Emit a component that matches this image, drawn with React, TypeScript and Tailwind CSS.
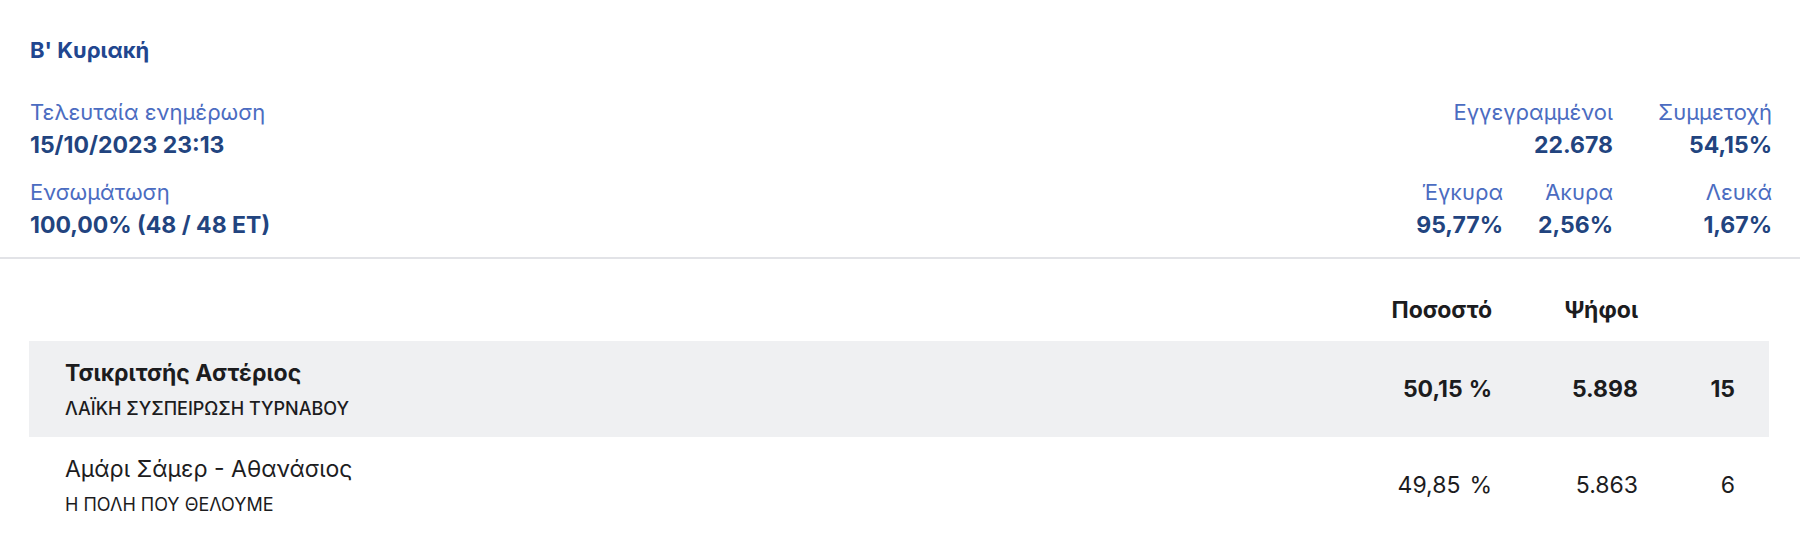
import React from "react";

const stats = [
  { label: "Έγκυρα", value: "95,77%", w: "w-auto" },
  { label: "Άκυρα", value: "2,56%", w: "w-[110px]" },
  { label: "Λευκά", value: "1,67%", w: "w-[159px]" },
];

const candidates = [
  { name: "Τσικριτσής Αστέριος", party: "ΛΑΪΚΗ ΣΥΣΠΕΙΡΩΣΗ ΤΥΡΝΑΒΟΥ", pct: "50,15", votes: "5.898", seats: "15", winner: true },
  { name: "Αμάρι Σάμερ - Αθανάσιος", party: "Η ΠΟΛΗ ΠΟΥ ΘΕΛΟΥΜΕ", pct: "49,85", votes: "5.863", seats: "6", winner: false },
];

function Stat({ label, value, className = "" }: { label: string; value: string; className?: string }) {
  return (
    <div className={`text-right ${className}`}>
      <div className="text-[22px] leading-[33px] text-[#4b6cc1]">{label}</div>
      <div className="text-[23px] leading-[33px] font-bold text-[#22447f]">{value}</div>
    </div>
  );
}

export default function App() {
  return (
    <main className="w-[1800px] h-[541px] bg-white font-['Inter',sans-serif] overflow-hidden">
      {/* Κεφαλίδα εκλογικής περιφέρειας */}
      <section className="pl-[30px] pr-[28px] pt-[36px] pb-[15px]">
        <h2 className="text-[22px] leading-[28px] font-bold text-[#21468f]">Β' Κυριακή</h2>

        <div className="mt-[32px] flex justify-between">
          <div className="flex flex-col gap-[14px]">
            <div>
              <div className="text-[22px] leading-[33px] text-[#4b6cc1]">Τελευταία ενημέρωση</div>
              <div className="text-[23px] leading-[33px] font-bold text-[#22447f]">15/10/2023 23:13</div>
            </div>
            <div>
              <div className="text-[22px] leading-[33px] text-[#4b6cc1]">Ενσωμάτωση</div>
              <div className="text-[23px] leading-[33px] font-bold text-[#22447f]">100,00% (48 / 48 ET)</div>
            </div>
          </div>

          <div className="flex flex-col gap-[14px]">
            <div className="flex justify-end">
              <Stat label="Εγγεγραμμένοι" value="22.678" />
              <Stat label="Συμμετοχή" value="54,15%" className="w-[159px]" />
            </div>
            <div className="flex justify-end">
              {stats.map((s) => (
                <Stat key={s.label} label={s.label} value={s.value} className={s.w} />
              ))}
            </div>
          </div>
        </div>
      </section>

      <div className="h-[2px] bg-[#e2e3e7]" />

      {/* Πίνακας αποτελεσμάτων */}
      <section className="pl-[29px] pr-[31px]">
        <div className="flex pt-[37px] pb-[17px] pr-[34px] text-[23px] leading-[28px] font-bold text-[#1c1c1e]">
          <div className="flex-1" />
          <div className="w-[120px] text-right">Ποσοστό</div>
          <div className="w-[146px] text-right">Ψήφοι</div>
          <div className="w-[97px]" />
        </div>

        {candidates.map((c) => (
          <div
            key={c.name}
            className={`flex items-center h-[96px] pl-[36px] pr-[34px] text-[#1c1c1e] ${c.winner ? "bg-[#eff0f2] font-bold" : "font-normal"}`}
          >
            <div className="flex-1">
              <div className="text-[23px] leading-[30px]">{c.name}</div>
              <div className={`mt-[10px] text-[18px] leading-[22px] ${c.winner ? "font-medium" : "font-normal"}`}>{c.party}</div>
            </div>
            <div className="w-[130px] text-right text-[23px] leading-[28px]">
              {c.pct}
              <span className={c.winner ? "ml-[6px]" : "ml-[9px]"}>%</span>
            </div>
            <div className="w-[146px] text-right text-[23px] leading-[28px]">{c.votes}</div>
            <div className="w-[97px] text-right text-[23px] leading-[28px]">{c.seats}</div>
          </div>
        ))}
      </section>
    </main>
  );
}
